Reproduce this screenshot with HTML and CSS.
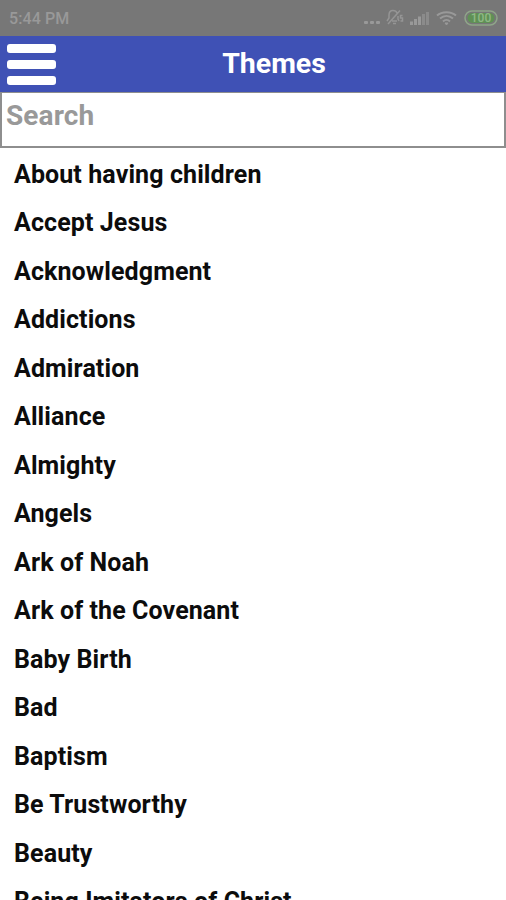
FILE: index.html
```html
<!DOCTYPE html>
<html lang="en">
<head>
    <meta charset="UTF-8">
    <meta name="viewport" content="width=device-width, initial-scale=1.0">
    <title>Themes</title>
    <link rel="stylesheet" href="styles.css">
</head>
<body>
    <div class="statusbar">
        <span class="time">5:44 PM</span>
        <svg class="status-icons" width="138" height="24" viewBox="0 0 138 24">
            <g fill="#999">
                <rect x="4" y="15" width="4" height="3" rx="1"/>
                <rect x="10" y="15" width="4" height="3" rx="1"/>
                <rect x="16" y="15" width="4" height="3" rx="1"/>
                <rect x="50" y="15.500" width="3" height="3.500"/>
                <rect x="54" y="13" width="3" height="6"/>
                <rect x="58" y="10.500" width="3" height="8.500"/>
                <rect x="62" y="8" width="3" height="11" fill="#8b8b8b"/>
                <rect x="66" y="6" width="3" height="13" fill="#8b8b8b"/>
            </g>
            <g fill="none" stroke="#959595" stroke-width="1.500">
                <path d="M27 15l2-3V9c0-3 2-4.500 4-4.500s3.500 1 4 2.500M28 18L40 4.500M32 15h5M33 17.500h3M38 10v3l1 2"/>
                <path d="M42.500 9.500h-2v2.500h2v3h-2"/>
            </g>
            <g fill="none" stroke="#999" stroke-width="2">
                <path d="M77 9.500c5-4.500 14-4.500 19 0M80 12.500c4-3.500 9-3.500 13 0M83 15.500c2-2 5-2 7 0"/>
                <path d="M85 17h3l-1.500 2z" fill="#999" stroke-width="1"/>
            </g>
            <rect x="105" y="5" width="32" height="14" rx="7" fill="#777" stroke="#8fa589" stroke-width="1.500"/>
            <rect x="107.500" y="7" width="27" height="10" rx="5" fill="#5f9055"/>
            <text class="battery" x="121" y="16" text-anchor="middle">100</text>
        </svg>
    </div>
    <div class="header">
        <div class="menu">
            <span class="bar"></span>
            <span class="bar"></span>
            <span class="bar"></span>
        </div>
        <h1 class="title">Themes</h1>
    </div>
    <input type="text" class="search" placeholder="Search">
    <ul class="themes">
        <li>About having children</li>
        <li>Accept Jesus</li>
        <li>Acknowledgment</li>
        <li>Addictions</li>
        <li>Admiration</li>
        <li>Alliance</li>
        <li>Almighty</li>
        <li>Angels</li>
        <li>Ark of Noah</li>
        <li>Ark of the Covenant</li>
        <li>Baby Birth</li>
        <li>Bad</li>
        <li>Baptism</li>
        <li>Be Trustworthy</li>
        <li>Beauty</li>
        <li>Being Imitators of Christ</li>
    </ul>
</body>
</html>
```
FILE: styles.css
```css
* {
    box-sizing: border-box;
}
body {
    display: flex;
    flex-direction: column;
    height: 100vh;
    margin: 0;
    overflow: hidden;
    background: #fff;
    font-family: Roboto, sans-serif;
}
.statusbar {
    display: flex;
    flex: none;
    justify-content: space-between;
    align-items: center;
    height: 36px;
    padding: 0 8px 0 9px;
    background: #777;
}
.time {
    font-size: 16px;
    font-weight: 500;
    letter-spacing: 0.1px;
    color: #999;
}
.battery {
    font-size: 12px;
    font-weight: 500;
    fill: #8fb985;
}
.header {
    display: flex;
    flex: none;
    align-items: center;
    height: 56px;
    padding: 0 7px;
    background: #3f51b5;
}
.menu {
    display: flex;
    flex-direction: column;
    gap: 7px;
    width: 49px;
}
.bar {
    height: 9px;
    border-radius: 3px;
    background: #fff;
}
.title {
    flex: 1;
    margin: 0;
    padding: 0 7px 2px 0;
    text-align: center;
    font-size: 28.5px;
    font-weight: 700;
    color: #fff;
}
.search {
    flex: none;
    width: 100%;
    height: 56px;
    padding: 0 4px 8px;
    border: 2px solid #8e8e8e;
    border-top-width: 1px;
    border-radius: 0;
    background: #fff;
    font-family: inherit;
    font-size: 28px;
    font-weight: 700;
    letter-spacing: 0.1px;
}
.search::placeholder {
    color: #999;
}
.themes {
    margin: 0;
    padding: 2.5px 0 0 14px;
    list-style: none;
    font-size: 25px;
    font-weight: 700;
    line-height: 48.5px;
    letter-spacing: 0.1px;
    color: #0c0c0c;
}
```
